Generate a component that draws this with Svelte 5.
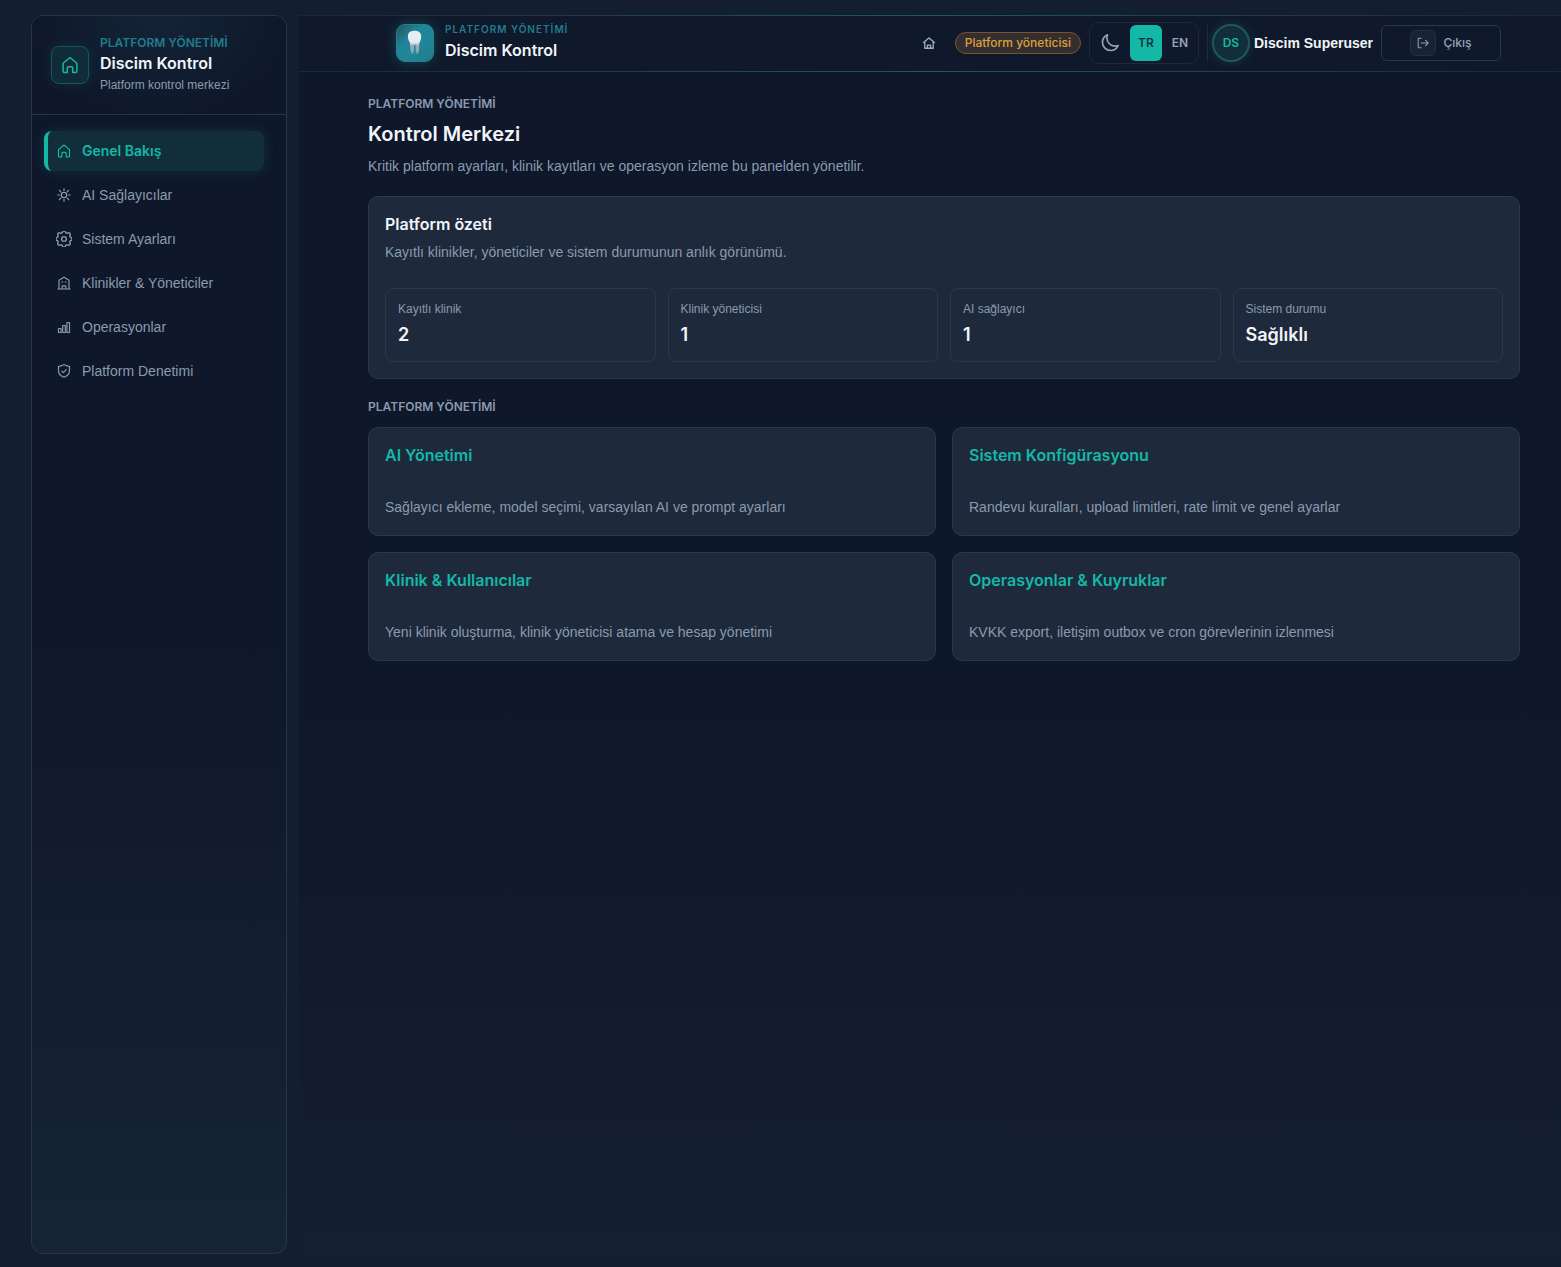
<script lang="ts">
	type Icon = 'home' | 'sun' | 'gear' | 'clinic' | 'bars' | 'shield';

	const navItems: { label: string; icon: Icon }[] = [
		{ label: 'Genel Bakış', icon: 'home' },
		{ label: 'AI Sağlayıcılar', icon: 'sun' },
		{ label: 'Sistem Ayarları', icon: 'gear' },
		{ label: 'Klinikler & Yöneticiler', icon: 'clinic' },
		{ label: 'Operasyonlar', icon: 'bars' },
		{ label: 'Platform Denetimi', icon: 'shield' }
	];

	const stats = [
		{ label: 'Kayıtlı klinik', value: '2' },
		{ label: 'Klinik yöneticisi', value: '1' },
		{ label: 'AI sağlayıcı', value: '1' },
		{ label: 'Sistem durumu', value: 'Sağlıklı' }
	];

	const areas = [
		{ title: 'AI Yönetimi', text: 'Sağlayıcı ekleme, model seçimi, varsayılan AI ve prompt ayarları' },
		{ title: 'Sistem Konfigürasyonu', text: 'Randevu kuralları, upload limitleri, rate limit ve genel ayarlar' },
		{ title: 'Klinik & Kullanıcılar', text: 'Yeni klinik oluşturma, klinik yöneticisi atama ve hesap yönetimi' },
		{ title: 'Operasyonlar & Kuyruklar', text: 'KVKK export, iletişim outbox ve cron görevlerinin izlenmesi' }
	];

	let active = $state(0);
	let lang = $state('TR');
</script>

{#snippet homeIcon()}
	<svg class="icon" viewBox="0 0 16 16" aria-hidden="true">
		<path d="M2.5 6.6 8 2l5.500 4.600v6.400a1 1 0 0 1-1 1h-2.300v-3.600a1 1 0 0 0-1-1H6.800a1 1 0 0 0-1 1V14H3.500a1 1 0 0 1-1-1Z" />
	</svg>
{/snippet}

{#snippet navIcon(name: Icon)}
	{#if name === 'home'}
		{@render homeIcon()}
	{:else if name === 'sun'}
		<svg class="icon" viewBox="0 0 16 16" aria-hidden="true">
			<circle cx="8" cy="8" r="2.700" />
			<path d="M8 1.800v1.800M8 12.400v1.800M1.800 8h1.800M12.400 8h1.800M3.500 3.500l1.300 1.300M11.200 11.200l1.300 1.300M3.500 12.500l1.300-1.300M11.200 4.800l1.300-1.300" />
		</svg>
	{:else if name === 'gear'}
		<svg class="icon gear" viewBox="3.200 3.200 17.600 17.600" aria-hidden="true">
			<circle cx="12" cy="12" r="2.600" />
			<path d="M10.300 4.300c.43-1.760 2.930-1.760 3.350 0a1.720 1.720 0 0 0 2.570 1.070c1.550-.94 3.310.83 2.370 2.370a1.720 1.720 0 0 0 1.070 2.570c1.750.43 1.750 2.930 0 3.350a1.720 1.720 0 0 0-1.070 2.570c.94 1.550-.83 3.310-2.370 2.370a1.720 1.720 0 0 0-2.570 1.070c-.42 1.750-2.920 1.750-3.350 0a1.720 1.720 0 0 0-2.570-1.070c-1.540.94-3.310-.82-2.370-2.370a1.720 1.720 0 0 0-1.060-2.570c-1.760-.42-1.760-2.920 0-3.350a1.720 1.720 0 0 0 1.060-2.570c-.94-1.540.83-3.310 2.370-2.370 1 .61 2.300.07 2.570-1.070Z" />
		</svg>
	{:else if name === 'clinic'}
		<svg class="icon" viewBox="0 0 16 16" aria-hidden="true">
			<path d="M2 14h12M3 14V5.200L8 2.200l5 3V14M6.200 14v-3.200h3.600V14M6 7h.8M9.200 7h.8" />
		</svg>
	{:else if name === 'bars'}
		<svg class="icon" viewBox="0 0 16 16" aria-hidden="true">
			<path d="M2.500 9.500h2.600v4H2.500ZM6.700 6.500h2.600v7H6.700ZM10.900 3.500h2.600v10h-2.600Z" />
		</svg>
	{:else}
		<svg class="icon" viewBox="0 0 16 16" aria-hidden="true">
			<path d="M8 1.800 13.500 3.600v4.200c0 3-2.200 5.200-5.500 6.400-3.300-1.200-5.500-3.400-5.500-6.400V3.600ZM5.800 8.100l1.500 1.500 2.900-3" />
		</svg>
	{/if}
{/snippet}

<div class="shell">
	<aside class="sidebar">
		<div class="sidebar-brand">
			<span class="brand-mark">{@render homeIcon()}</span>
			<div>
				<p class="brand-eyebrow">PLATFORM YÖNETİMİ</p>
				<p class="brand-title">Discim Kontrol</p>
				<p class="brand-sub">Platform kontrol merkezi</p>
			</div>
		</div>
		<nav class="nav" aria-label="Platform">
			{#each navItems as item, i}
				<a href="#{item.icon}" class="nav-link" class:active={active === i} onclick={() => (active = i)}>
					{@render navIcon(item.icon)}
					<span>{item.label}</span>
				</a>
			{/each}
		</nav>
	</aside>

	<div class="main">
		<header class="topbar">
			<div class="top-brand">
				<span class="logo">
					<svg viewBox="0 0 38 38" aria-hidden="true">
						<defs>
							<linearGradient id="root" x1="0" y1="0" x2="0" y2="1">
								<stop offset="0.500" stop-color="#e6edf2" />
								<stop offset="0.650" stop-color="#97a9ba" />
								<stop offset="0.850" stop-color="#97a9ba" />
								<stop offset="1" stop-color="#19b9a8" />
							</linearGradient>
						</defs>
						<path
							d="M11.500 11C12 7 15.500 6 18.500 6c3.500 0 6.500 1.200 7 5 .3 3-.6 5.500-1.900 7.800-.2 4-.2 7.800-.8 10.600-.6 1.600-2.600 1.500-2.900 0-.3-2.800-.1-5.600-.5-8-.3-.9-1.100-.9-1.300 0-.4 2.500-.1 5.500-.7 8.200-.4 1.400-2 1.400-2.400 0-.9-3-1.100-6.900-1.300-10.800C12.400 16.600 11.300 14 11.500 11Z"
							fill="url(#root)"
						/>
					</svg>
				</span>
				<div>
					<p class="top-eyebrow">PLATFORM YÖNETİMİ</p>
					<p class="top-title">Discim Kontrol</p>
				</div>
			</div>

			<div class="top-actions">
				<a class="home-link" href="#home" aria-label="Ana sayfa">
					<svg class="icon" viewBox="0 0 16 16" aria-hidden="true">
						<path d="M1.800 7.500 8 2.200l6.200 5.300M3.200 6.500V14h9.600V6.500M6.200 14v-3.500h3.600V14" />
					</svg>
				</a>
				<span class="role">Platform yöneticisi</span>
				<div class="switcher">
					<button class="theme" type="button" aria-label="Tema">
						<svg class="icon" viewBox="0 0 24 24" aria-hidden="true">
							<path d="M21.750 15a9.700 9.700 0 0 1-3.750.750A9.750 9.750 0 0 1 8.250 6c0-1.330.27-2.600.75-3.750A9.750 9.750 0 0 0 3 11.250 9.750 9.750 0 0 0 12.750 21a9.750 9.750 0 0 0 9-6Z" />
						</svg>
					</button>
					{#each ['TR', 'EN'] as code}
						<button class="lang" class:selected={lang === code} type="button" onclick={() => (lang = code)}>{code}</button>
					{/each}
				</div>
				<div class="user">
					<span class="avatar">DS</span>
					<span class="user-name">Discim Superuser</span>
				</div>
				<button class="logout" type="button">
					<span class="logout-icon">
						<svg class="icon" viewBox="0 0 16 16" aria-hidden="true">
							<path d="M5.800 2.500H3.500a1 1 0 0 0-1 1v9a1 1 0 0 0 1 1h2.300M6 8h8M11 5l3 3-3 3" />
						</svg>
					</span>
					Çıkış
				</button>
			</div>
		</header>

		<main class="content">
			<p class="eyebrow">PLATFORM YÖNETİMİ</p>
			<h1>Kontrol Merkezi</h1>
			<p class="lead">Kritik platform ayarları, klinik kayıtları ve operasyon izleme bu panelden yönetilir.</p>

			<section class="card summary">
				<h2>Platform özeti</h2>
				<p class="text">Kayıtlı klinikler, yöneticiler ve sistem durumunun anlık görünümü.</p>
				<dl class="stats">
					{#each stats as stat}
						<div class="stat">
							<dt>{stat.label}</dt>
							<dd>{stat.value}</dd>
						</div>
					{/each}
				</dl>
			</section>

			<p class="eyebrow">PLATFORM YÖNETİMİ</p>
			<div class="areas">
				{#each areas as area}
					<a class="card area" href="#area">
						<h3>{area.title}</h3>
						<p class="text">{area.text}</p>
					</a>
				{/each}
			</div>
		</main>
	</div>
</div>

<style>
	:global(body) {
		margin: 0;
		background: #131e2f;
	}

	.shell {
		--teal: #14b8a6;
		--muted: #8a9bae;
		--text: #f1f5f9;
		--line: #263648;
		--body-font: 'Liberation Sans', Arial, sans-serif;
		display: flex;
		gap: 12px;
		box-sizing: border-box;
		min-height: 100vh;
		padding: 15px 0 13px 31px;
		font-family: Inter, 'Liberation Sans', sans-serif;
		font-size: 14px;
		line-height: 20px;
		color: var(--text);
	}

	p,
	h1,
	h2,
	h3,
	dl,
	dd {
		margin: 0;
	}

	a {
		color: inherit;
		text-decoration: none;
	}

	button {
		padding: 0;
		border: 0;
		background: none;
		font: inherit;
		color: inherit;
		cursor: pointer;
	}

	.icon {
		flex: none;
		width: 16px;
		height: 16px;
		fill: none;
		stroke: currentColor;
		stroke-width: 1.2;
		stroke-linecap: round;
		stroke-linejoin: round;
	}

	.icon.gear {
		stroke-width: 1.5;
	}

	/* Sidebar */
	.sidebar {
		flex: none;
		box-sizing: border-box;
		width: 256px;
		border: 1px solid var(--line);
		border-radius: 12px;
		background: linear-gradient(180deg, #0f172a 0%, #0f172a 50%, #162433 100%);
		overflow: hidden;
	}

	.sidebar-brand {
		display: flex;
		align-items: center;
		gap: 11px;
		height: 98px;
		padding: 0 19px;
		border-bottom: 1px solid var(--line);
		background: radial-gradient(ellipse at 50% 0%, #132436 0%, #0f172a 75%);
	}

	.brand-mark {
		display: grid;
		place-items: center;
		box-sizing: border-box;
		width: 38px;
		height: 38px;
		border: 1px solid #1b5358;
		border-radius: 8px;
		background: #112c39;
		color: var(--teal);
		box-shadow: 0 0 12px rgba(20, 184, 166, 0.15);
	}

	.brand-mark .icon {
		width: 20px;
		height: 20px;
	}

	.brand-eyebrow {
		font-size: 12px;
		line-height: 18px;
		font-weight: 600;
		color: #217c8b;
	}

	.brand-title {
		font-size: 16px;
		line-height: 22px;
		font-weight: 600;
	}

	.brand-sub {
		font-family: var(--body-font);
		font-size: 12px;
		line-height: 22px;
		color: var(--muted);
	}

	.nav {
		display: flex;
		flex-direction: column;
		gap: 4px;
		padding: 16px 22px 16px 12px;
	}

	.nav-link {
		display: flex;
		align-items: center;
		gap: 10px;
		box-sizing: border-box;
		height: 40px;
		padding-left: 8px;
		border-left: 4px solid transparent;
		border-radius: 8px;
		font-family: var(--body-font);
		color: var(--muted);
	}

	.nav-link.active {
		border-left-color: var(--teal);
		background: #112e3a;
		font-family: inherit;
		color: var(--teal);
		font-weight: 600;
		box-shadow: 0 0 14px rgba(20, 184, 166, 0.16);
	}

	/* Top bar */
	.main {
		flex: 1;
		min-width: 0;
		background: linear-gradient(180deg, #0f172a 0%, #0f172a 55%, #141f30 100%);
	}

	.topbar {
		display: flex;
		align-items: center;
		justify-content: space-between;
		box-sizing: border-box;
		height: 57px;
		padding: 0 60px 2px 97px;
		border-top: 1px solid;
		border-bottom: 1px solid;
		border-image: linear-gradient(90deg, #1a2739, #22575b 50%, #1a2739) 1;
		background: #10192b;
	}

	.top-brand,
	.top-actions,
	.user,
	.switcher {
		display: flex;
		align-items: center;
	}

	.top-brand {
		gap: 11px;
	}

	.logo {
		box-sizing: border-box;
		width: 38px;
		height: 38px;
		border: 1px solid #27828c;
		border-radius: 9px;
		background: linear-gradient(135deg, #245b62 5%, #21859a 35%, #21859a 60%, #247c88 100%);
		box-shadow: 0 0 12px rgba(20, 184, 166, 0.3);
	}

	.top-eyebrow {
		font-size: 10px;
		line-height: 14px;
		font-weight: 600;
		letter-spacing: 1px;
		color: #217c8b;
	}

	.top-title {
		font-size: 16px;
		line-height: 28px;
		font-weight: 600;
	}

	.top-actions {
		gap: 8px;
	}

	.home-link {
		display: grid;
		place-items: center;
		width: 36px;
		height: 36px;
		color: #a0aec0;
	}

	.home-link .icon {
		width: 14px;
		height: 14px;
		stroke-width: 1.5;
	}

	.role {
		padding: 0 9px;
		border: 1px solid #775528;
		border-radius: 11px;
		background: #342e31;
		font-size: 12px;
		font-weight: 500;
		color: #dca039;
	}

	.switcher {
		gap: 2px;
		padding: 2px;
		border: 1px solid #1d2a3c;
		border-radius: 10px;
	}

	.theme,
	.lang {
		display: grid;
		place-items: center;
		width: 32px;
		height: 36px;
		border-radius: 6px;
		font-size: 12px;
		font-weight: 600;
		color: #94a3b8;
	}

	.theme {
		width: 36px;
	}

	.theme .icon {
		width: 20px;
		height: 20px;
		stroke-width: 2;
	}

	.lang.selected {
		background: var(--teal);
		color: #12343f;
	}

	.user {
		gap: 4px;
		padding-left: 4px;
		border-left: 1px solid #1d2a3c;
	}

	.avatar {
		display: grid;
		place-items: center;
		box-sizing: border-box;
		width: 38px;
		height: 38px;
		border: 2px solid #20575d;
		border-radius: 50%;
		background: #112e3a;
		font-size: 12px;
		font-weight: 600;
		color: var(--teal);
		box-shadow: 0 0 10px rgba(20, 184, 166, 0.2);
	}

	.user-name {
		font-family: var(--body-font);
		font-weight: 600;
		white-space: nowrap;
	}

	.logout {
		display: flex;
		align-items: center;
		justify-content: center;
		gap: 7px;
		box-sizing: border-box;
		width: 120px;
		height: 36px;
		border: 1px solid #2a384a;
		border-radius: 6px;
		font-size: 12px;
		font-weight: 500;
		color: #94a3b8;
	}

	.logout-icon {
		display: grid;
		place-items: center;
		box-sizing: border-box;
		width: 26px;
		height: 26px;
		border: 1px solid #223041;
		border-radius: 6px;
		background: #182334;
	}

	.logout-icon .icon {
		width: 14px;
		height: 14px;
	}

	/* Content */
	.content {
		padding: 22px 41px 40px 69px;
	}

	.eyebrow {
		font-size: 12px;
		font-weight: 600;
		color: var(--muted);
	}

	h1 {
		margin-top: 6px;
		font-size: 20px;
		line-height: 28px;
		font-weight: 600;
	}

	.lead {
		margin: 8px 0 20px;
		font-family: var(--body-font);
		color: var(--muted);
	}

	.card {
		padding: 16px;
		border: 1px solid #283a4b;
		border-radius: 10px;
		background: #1e293b;
	}

	.summary {
		margin-bottom: 18px;
	}

	h2,
	h3 {
		font-size: 16px;
		line-height: 22px;
		font-weight: 600;
	}

	h3 {
		margin-bottom: 30px;
		color: var(--teal);
	}

	.text {
		font-family: var(--body-font);
		line-height: 22px;
		color: var(--muted);
	}

	.summary .text {
		margin-top: 6px;
	}

	.area {
		padding-bottom: 17px;
	}

	.stats {
		display: grid;
		grid-template-columns: repeat(4, 1fr);
		gap: 12px;
		margin-top: 25px;
	}

	.stat {
		padding: 12px;
		border: 1px solid #2a3a4b;
		border-radius: 8px;
	}

	dt {
		font-family: var(--body-font);
		font-size: 12px;
		line-height: 16px;
		color: var(--muted);
	}

	dd {
		margin-top: 4px;
		font-size: 18px;
		line-height: 28px;
		font-weight: 600;
	}

	.areas {
		display: grid;
		grid-template-columns: repeat(2, 1fr);
		gap: 16px;
		margin-top: 10px;
	}
</style>
